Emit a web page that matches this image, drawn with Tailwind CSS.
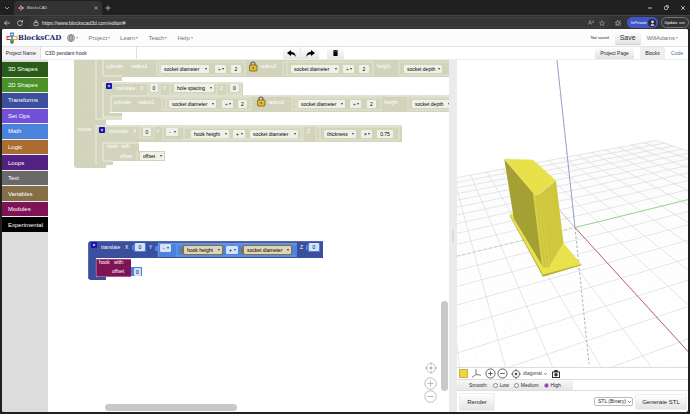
<!DOCTYPE html>
<html lang="en">
<head>
    <meta charset="UTF-8">
    <meta name="viewport" content="width=device-width, initial-scale=1.0">
    <title>BlocksCAD</title>
    <script src="https://cdn.jsdelivr.net/npm/@tailwindcss/browser@4"></script>
</head>
<body class="h-screen flex flex-col overflow-hidden bg-[#202020] font-['Liberation_Sans',sans-serif] text-[5px] leading-none text-gray-800">

    <!-- Browser tabs -->
    <div class="h-[15px] shrink-0 flex items-stretch text-gray-300">
        <button class="w-[14px] flex items-center justify-center" aria-label="Tab actions">
            <svg class="size-[6px]" viewBox="0 0 6 6" fill="none" stroke="currentColor" stroke-width=".7"><path d="M1 2l2 2 2-2"/></svg>
        </button>
        <div class="w-[88px] mt-[1px] rounded-t bg-[#333333] flex items-center gap-[3px] px-[4px] text-[4px]">
            <svg class="size-[6px]" viewBox="0 0 12 12"><path fill="#e8785a" d="M1 4h4v4H1z"/><path fill="#e6c04a" d="M7 4h4v4H7z"/><path fill="#6da7e0" d="M4 1h4v3H4z"/><path fill="#d84b88" d="M4 8h4v3H4z"/></svg>
            <span class="flex-1">BlocksCAD</span>
            <button aria-label="Close tab"><svg class="size-[4px]" viewBox="0 0 4 4" stroke="currentColor" stroke-width=".6"><path d="M.5 .5l3 3M3.5 .5l-3 3"/></svg></button>
        </div>
        <button class="w-[12px] flex items-center justify-center" aria-label="New tab">
            <svg class="size-[6px]" viewBox="0 0 6 6" stroke="currentColor" stroke-width=".7"><path d="M3 .5v5M.5 3h5"/></svg>
        </button>
        <div class="ml-auto flex items-center gap-[12px] pr-[5px] text-white">
            <button aria-label="Minimize"><svg class="size-[4px]" viewBox="0 0 4 4" stroke="currentColor" stroke-width=".7"><path d="M0 2h4"/></svg></button>
            <button aria-label="Restore"><svg class="size-[5px]" viewBox="0 0 5 5" fill="none" stroke="currentColor" stroke-width=".6"><rect x=".5" y="1.5" width="3" height="3" rx=".6"/><path d="M2 .5h1.8q.7 0 .7.7V3"/></svg></button>
            <button aria-label="Close"><svg class="size-[4px]" viewBox="0 0 4 4" stroke="currentColor" stroke-width=".7"><path d="M.2 .2l3.6 3.6M3.8 .2L.2 3.8"/></svg></button>
        </div>
    </div>

    <!-- Address bar -->
    <div class="h-[14px] shrink-0 bg-[#333333] border-t border-[#444444] flex items-center gap-[6px] px-[4px] text-gray-200">
        <button aria-label="Back"><svg class="size-[6px]" viewBox="0 0 6 6" fill="none" stroke="currentColor" stroke-width=".7"><path d="M6 3H.5M3 .5L.5 3 3 5.5"/></svg></button>
        <button class="ml-[1px]" aria-label="Reload"><svg class="size-[6px]" viewBox="0 0 6 6" fill="none" stroke="currentColor" stroke-width=".7"><path d="M5.3 2A2.5 2.5 0 1 0 5.5 3.5M5.5 .3V2H3.8"/></svg></button>
        <div class="flex-1 h-[11px] rounded-full bg-[#363636] border border-[#404040] flex items-center gap-[3px] px-[3px]">
            <svg class="size-[6px] shrink-0" viewBox="0 0 6 6" fill="none" stroke="currentColor" stroke-width=".6"><rect x="1" y="2.5" width="4" height="3" rx=".5"/><path d="M2 2.5V1.5a1 1 0 0 1 2 0v1"/></svg>
            <input class="flex-1 min-w-0 outline-none" aria-label="Address" value="https://www.blockscad3d.com/editor/#">
            <svg class="w-[6px] h-[5px]" viewBox="0 0 6 5" fill="none" stroke="#aaaaaa" stroke-width=".6"><path d="M.3 4.7L2 .5l1.7 4.2M1 3.2h2M4 .8q1 .8 0 1.8M5 .2q1.3 1.5 0 3"/></svg>
            <svg class="size-[6px] ml-[2px]" viewBox="0 0 12 12" fill="none" stroke="#bbbbbb"><path d="M6 1l1.5 3.4 3.6.4-2.7 2.5.8 3.7L6 9.1 2.8 11l.8-3.7L.9 4.8l3.6-.4z"/></svg>
        </div>
        <button aria-label="Favorites"><svg class="size-[6px]" viewBox="0 0 12 12" fill="none" stroke="currentColor"><path d="M5 1l1.5 3.4 3.6.4-2.7 2.5.8 3.7L5 9.1 1.8 11l.8-3.7L1 4.8l2.5-.4zM9 2h3M10 7h2M10 10h2"/></svg></button>
        <button class="-mr-[3px] w-[31px] h-[11px] rounded-full bg-[#4355c4] text-white text-[4px] flex items-center justify-between pl-[4px] pr-[2px]">InPrivate
            <svg class="size-[8px]" viewBox="0 0 8 8"><circle cx="4" cy="4" r="4" fill="#26283a"/><circle cx="4.5" cy="2.8" r="1.4" fill="#d8d8d8"/><path d="M2.5 7q.2-2.5 2-2.5t1.8 2.5z" fill="#bbbbbb"/></svg>
        </button>
        <button class="-mr-[3px] w-[28px] h-[11px] rounded-full border border-[#777777] text-white text-[4px] flex items-center justify-center gap-[2px]">Update
            <svg class="w-[6px] h-[2px]" viewBox="0 0 6 2" fill="currentColor"><circle cx="1" cy="1" r=".7"/><circle cx="3" cy="1" r=".7"/><circle cx="5" cy="1" r=".7"/></svg>
        </button>
    </div>

    <div class="flex-1 min-h-0 mx-[2px] mb-[2px] flex flex-col bg-white rounded-[2px] overflow-hidden">

        <!-- Site header -->
        <header class="h-[18px] shrink-0 flex items-center bg-[#fcfcfc] border-b border-[#e4e4e4] text-[6px] text-[#777777]">
            <a href="#" class="flex items-center pl-[4px] font-['DejaVu_Serif',serif] font-bold text-[7px] text-[#1f2a6b]">
                <svg class="size-[12px]" viewBox="0 0 24 24">
                    <path fill="#4f93d2" d="M8 1h8v8h-2.5a2 2 0 1 1-3 0H8z"/>
                    <path fill="#cf2f4f" d="M1 8h8v2.5a2 2 0 1 0 0 3V16H1z"/>
                    <path fill="#e7a33c" d="M15 8h8v8h-8v-2.5a2 2 0 1 0 0-3z"/>
                    <path fill="#57a345" d="M8 15h2.5a2 2 0 1 1 3 0H16v5H8z"/>
                    <path fill="#6d3f9b" d="M9 20h6v3H9z"/>
                    <path fill="#ffffff" d="M3 10h4v1.5H4.5v1H7V14H3zM17 10h4v4h-4zM10.5 4h3v2h-3z"/>
                </svg>
                BlocksCAD
            </a>
            <nav class="flex items-center gap-[10px] ml-[6px]">
                <button class="flex items-center gap-[1px]" aria-label="Language">
                    <svg class="size-[8px]" viewBox="0 0 8 8" fill="none" stroke="currentColor" stroke-width=".7"><circle cx="4" cy="4" r="3.5"/><ellipse cx="4" cy="4" rx="1.6" ry="3.5"/><path d="M.5 4h7M4 .5v7M1 2.2h6M1 5.8h6"/></svg>
                    <svg class="w-[2px] h-[2px]" viewBox="0 0 4 3" fill="currentColor"><path d="M0 0h4L2 3z"/></svg>
                </button>
                <button class="flex items-center gap-[1px]">Project<svg class="w-[2px] h-[2px]" viewBox="0 0 4 3" fill="currentColor"><path d="M0 0h4L2 3z"/></svg></button>
                <button class="flex items-center gap-[1px]">Learn<svg class="w-[2px] h-[2px]" viewBox="0 0 4 3" fill="currentColor"><path d="M0 0h4L2 3z"/></svg></button>
                <button class="flex items-center gap-[1px]">Teach<svg class="w-[2px] h-[2px]" viewBox="0 0 4 3" fill="currentColor"><path d="M0 0h4L2 3z"/></svg></button>
                <button class="flex items-center gap-[1px]">Help<svg class="w-[2px] h-[2px]" viewBox="0 0 4 3" fill="currentColor"><path d="M0 0h4L2 3z"/></svg></button>
            </nav>
            <div class="ml-auto flex items-center pr-[10px]">
                <span class="text-[4px] text-gray-800 mr-[6px]">Not saved</span>
                <button class="w-[26px] h-[15px] rounded-[2px] bg-linear-to-b from-white to-[#e6e6e6] border-b border-[#cccccc] text-[7px] text-gray-800 mr-[6px]">Save</button>
                <button class="flex items-center gap-[1px]">WillAdams<svg class="w-[2px] h-[2px]" viewBox="0 0 4 3" fill="currentColor"><path d="M0 0h4L2 3z"/></svg></button>
            </div>
        </header>

        <!-- Project bar -->
        <div class="h-[13px] shrink-0 flex items-stretch border-b border-[#eeeeee]">
            <label for="projectName" class="w-[39px] flex items-center justify-center bg-[#f3f3f3] border-r border-[#e0e0e0]">Project Name</label>
            <input id="projectName" class="w-[96px] pl-[4px] border-r border-[#e0e0e0] outline-none" value="C3D pendant hook">
            <div class="ml-[146px] flex">
                <button class="w-[18px] flex items-center justify-center bg-linear-to-b from-white to-[#e6e6e6] border-r border-[#e6e6e6]" aria-label="Undo">
                    <svg class="w-[9px] h-[7px]" viewBox="0 0 9 7"><path d="M0 3L4 0v1.800Q8.5 2 8.8 7 7.5 4.3 4 4.3V6z"/></svg>
                </button>
                <button class="w-[18px] flex items-center justify-center bg-linear-to-b from-white to-[#e6e6e6]" aria-label="Redo">
                    <svg class="w-[9px] h-[7px]" viewBox="0 0 9 7"><path d="M9 3L5 0v1.800Q.5 2 .2 7 1.5 4.3 5 4.3V6z"/></svg>
                </button>
                <button class="w-[17px] ml-[8px] flex items-center justify-center bg-linear-to-b from-white to-[#e6e6e6]" aria-label="Delete">
                    <svg class="w-[5px] h-[6px]" viewBox="0 0 5 6"><path d="M0 .5h1.5V0h2v.5H5v1H0zM.4 1.8h4.2V6H.4z"/></svg>
                </button>
            </div>
            <div class="ml-auto flex items-stretch pr-[4px]">
                <button class="w-[39px] rounded-[1px] bg-linear-to-b from-white to-[#e2e2e2]">Project Page</button>
                <button class="w-[25px] ml-[6px] bg-[#eeeeee]">Blocks</button>
                <button class="w-[14px] ml-[5px] text-[#4a6a94]">Code</button>
            </div>
        </div>

        <main class="flex-1 min-h-0 grid grid-cols-[46px_401fr_8px_231fr] grid-rows-1">

            <!-- Toolbox -->
            <aside class="bg-[#dddddd] pt-[2px]">
                <div class="h-[170px] grid grid-rows-11 gap-[1px] bg-[#eeeeee] text-[6px] text-white *:text-left *:pl-[6px]">
                    <button class="bg-[#2b5c17]">3D Shapes</button>
                    <button class="bg-[#4b9128]">2D Shapes</button>
                    <button class="bg-[#3b4f9c]">Transforms</button>
                    <button class="bg-[#7350d8]">Set Ops</button>
                    <button class="bg-[#4b82dc]">Math</button>
                    <button class="bg-[#ab6c31]">Logic</button>
                    <button class="bg-[#532180]">Loops</button>
                    <button class="bg-[#696969]">Text</button>
                    <button class="bg-[#846f47]">Variables</button>
                    <button class="bg-[#7e1455]">Modules</button>
                    <button class="bg-black">Experimental</button>
                </div>
            </aside>

            <!-- Block workspace -->
            <section id="workspace" class="relative overflow-hidden bg-white" aria-label="Workspace">
                <svg class="absolute inset-0 size-full text-[5px]">
                    <defs>
                        <pattern id="off" width="3" height="3" patternUnits="userSpaceOnUse"><path fill="#cfd1b8" d="M0 0h3v3H0z"/><path stroke="#d6d8c3" stroke-width=".5" d="M0 0l3 3M3 0L0 3"/></pattern>
                        <g id="plus"><rect width="6" height="6" rx="1" fill="#1414b4"/><path d="M3 1.8v2.4M1.8 3h2.4" stroke="#ffffff" stroke-width=".8"/></g>
                        <g id="lock"><path d="M2 5V3a2 2 0 0 1 4 0v2" fill="none" stroke="#555555" stroke-width="1.1"/><rect x=".5" y="4" width="7.5" height="6" rx="1" fill="#e8b930" stroke="#5f4d17" stroke-width=".7"/><circle cx="4.2" cy="7" r=".8" fill="#4a3a10"/></g>
                    </defs>
                    <g transform="translate(-48 -60)">
                        <!-- disabled stack -->
                        <path fill="url(#off)" d="M74 60H449V77H122V81H110V82H243V95H449V112H110V113H122V120H106V125H402V142H139V151H165V161H113V165H106V168H76L74 166Z"/>
                        <g fill="none" stroke="#f1f2e6" stroke-width=".9">
                            <path d="M96 60V119H122M103 60V76H122M103 117V83H243M111 112V96H449M122 117H102M96 165V126H402M103 161V143H139M103 161H113"/>
                        </g>
                        <g fill="none" stroke="#e4e6d5" stroke-width="1">
                            <rect x="157" y="62" width="88" height="13"/><rect x="283" y="62" width="90" height="13"/><rect x="399" y="62" width="60" height="13"/>
                            <rect x="148" y="83" width="12" height="11"/><rect x="170" y="83" width="47" height="11"/><rect x="227" y="83" width="14" height="11"/>
                            <rect x="162" y="98" width="89" height="12"/><rect x="292" y="98" width="89" height="12"/><rect x="408" y="98" width="60" height="12"/>
                            <rect x="140" y="127" width="14" height="11"/><rect x="163" y="127" width="140" height="13"/><rect x="184" y="128" width="117" height="11"/><rect x="316" y="127" width="83" height="13"/>
                            <path d="M160 62v13M287 62v13M166 98v12M296 98v12M320 127v13M137 151v9"/>
                        </g>
                        <g fill="#ffffff">
                            <text x="106" y="68">cylinder</text><text x="131" y="68">radius1</text><text x="260" y="68">radius2</text><text x="377" y="68">height</text>
                            <text x="116" y="90">translate</text><text x="140" y="90">X</text><text x="163" y="90">Y</text><text x="220" y="90">Z</text>
                            <text x="114" y="104">cylinder</text><text x="138" y="104">radius1</text><text x="268" y="104">radius2</text><text x="384" y="104">height</text>
                            <text x="78" y="131">minus</text><text x="109" y="133">translate</text><text x="133" y="133">X</text><text x="156" y="133">Y</text><text x="307" y="133">Z</text>
                            <text x="107" y="148">hook</text><text x="121" y="148">with</text><text x="120" y="158">offset</text>
                        </g>
                        <use href="#lock" x="249" y="61"/><use href="#lock" x="257" y="96"/>
                        <use href="#plus" x="106" y="83"/><use href="#plus" x="99" y="127"/>

                        <!-- active stack -->
                        <path fill="#3b4f9f" d="M90 241H323V258H96V277H106V280H90L88 278V243Z"/>
                        <path fill="none" stroke="#6374b8" stroke-width=".7" d="M88.5 279V243l2-1.5H323"/>
                        <path fill="#7e1455" d="M96 259H131V277H97L96 276Z"/>
                        <path fill="none" stroke="#c78fb0" stroke-width=".6" d="M96.3 276V259.3H131M96.3 276.5H131"/>
                        <g fill="#4b82dc">
                            <path d="M134 243h12v9h-12v-2h-2v-5h2zM158 243h139v14h-139v-6h-3v-5h3zM308 243h12v9h-12v-2h-2v-5h2zM131 267h11v9h-11z"/>
                        </g>
                        <path fill="none" stroke="#82a9ea" stroke-width=".7" d="M158.3 257V243.3H297M177 256V245H296M177 256H296"/>
                        <path fill="#846f47" d="M183 245h40v10h-40v-2h-2v-5h2zM243 245h49v10h-49v-2h-2v-5h2z"/>
                        <use href="#plus" x="91" y="242"/>
                        <g fill="#ffffff">
                            <text x="101" y="249">translate</text><text x="125" y="249">X</text><text x="149" y="249">Y</text><text x="300" y="249">Z</text>
                            <text x="99" y="264">hook</text><text x="114" y="264">with:</text><text x="112" y="273">offset</text>
                        </g>
                    </g>
                </svg>

                <div class="absolute right-[12px] bottom-[9px] flex flex-col items-center text-[#b4b4b4]">
                    <button class="mb-[3px]" aria-label="Center"><svg class="size-[12px]" viewBox="0 0 12 12" fill="none" stroke="currentColor" stroke-width=".8"><circle cx="6" cy="6" r="4.5"/><path d="M6 0v3M6 9v3M0 6h3M9 6h3"/><circle cx="6" cy="6" r="1.2" fill="currentColor"/></svg></button>
                    <button aria-label="Zoom in"><svg class="size-[13px]" viewBox="0 0 12 12" fill="none" stroke="currentColor" stroke-width=".8"><circle cx="6" cy="6" r="5.3"/><path d="M6 3v6M3 6h6"/></svg></button>
                    <button aria-label="Zoom out"><svg class="size-[13px]" viewBox="0 0 12 12" fill="none" stroke="currentColor" stroke-width=".8"><circle cx="6" cy="6" r="5.3"/><path d="M3 6h6"/></svg></button>
                </div>
                <!-- scrollbars -->
                <div class="absolute right-[1px] top-[241px] w-[7px] h-[90px] rounded-full bg-[#c8c8c8]"></div>
                <div class="absolute bottom-[1px] left-[57px] w-[132px] h-[7px] rounded-full bg-[#c8c8c8]"></div>
            </section>

            <div class="bg-[#ebebeb] flex items-center justify-center"><div class="w-[2px] h-[12px] bg-[#dddddd]"></div></div>

            <!-- Viewer -->
            <section class="flex flex-col min-w-0">
                <svg id="scene" class="flex-1 min-h-0 w-full" viewBox="457 60 231 306" preserveAspectRatio="xMidYMid slice">
                    <g id="grid" fill="none"></g>
                    <path d="M557 60L575 227" stroke="#9c9cc6" fill="none"/>
                    <path d="M555.5 64h3M559 95h3M562 125h3M565 153h3" stroke="#b8b8d4" stroke-width=".5"/>
                    <path d="M575 227L589 363" stroke="#a3a3bd" stroke-width=".9" stroke-dasharray="2.5 2" fill="none"/>
                    <path d="M457 255.5L575 227" stroke="#a4dd98" stroke-width=".9" stroke-dasharray="3 2.5" fill="none"/>
                    <path d="M575 227L688 199" stroke="#8fd884" stroke-width=".9" fill="none"/>
                    <path d="M575 227L688 351" stroke="#b85a5a" stroke-width=".9" fill="none"/>
                    <path d="M560 210L575 227" stroke="#b88a8a" stroke-width=".7" stroke-dasharray="1.5 1" fill="none"/>
                    <path fill="#e9e24b" d="M510 214l4-1 49 29 18.5 22L543 275z"/>
                    <path fill="#b3ac35" d="M510 214l33 60 38.5-10.5v1L543 276l-33-60.5z"/>
                    <path fill="#a5a033" d="M504.5 159L534 193l9 73-29-48z"/>
                    <path fill="#cfc83e" d="M539 194l17-14 7.5 62-14.500 24h-3z"/>
                    <path fill="#d6cf43" d="M533 193q3 2 7 0l10 73q-4 2-8 0z"/>
                    <path stroke="#bdb639" stroke-width=".6" fill="none" d="M536.5 195l8.5 71M539 195l9 71"/>
                    <path fill="#e8e14c" d="M504.5 158.5l28.5 1 23 20.500-17 13.500q-2.500 1.500-5 0z"/>
                </svg>

                <div class="h-[12px] shrink-0 flex items-center border-t border-[#dddddd] pl-[2px] text-[#444444]">
                    <button class="size-[9px] bg-[#eed545] border border-[#c9b43b]" aria-label="Color"></button>
                    <button class="ml-[4px]" aria-label="Axes"><svg class="size-[9px]" viewBox="0 0 9 9" fill="none" stroke="currentColor" stroke-width=".7"><path d="M4 0v5.5L0 8.5M4 5.5l5 .7"/></svg></button>
                    <button class="ml-[4px]" aria-label="Zoom in"><svg class="size-[11px]" viewBox="0 0 12 12" fill="none" stroke="currentColor" stroke-width=".9"><circle cx="6" cy="6" r="5"/><path d="M6 3.5v5M3.5 6h5"/></svg></button>
                    <button class="ml-[1px]" aria-label="Zoom out"><svg class="size-[11px]" viewBox="0 0 12 12" fill="none" stroke="currentColor" stroke-width=".9"><circle cx="6" cy="6" r="5"/><path d="M3.5 6h5"/></svg></button>
                    <button class="ml-[3px]" aria-label="Reset view"><svg class="size-[10px]" viewBox="0 0 12 12" fill="none" stroke="currentColor" stroke-width=".9"><circle cx="6" cy="6" r="4.3"/><path d="M6 0v2M6 10v2M0 6h2M10 6h2"/><circle cx="6" cy="6" r="1.2" fill="currentColor"/></svg></button>
                    <div class="relative ml-[2px]">
                        <select class="appearance-none w-[24px] outline-none" aria-label="View"><option>diagonal</option></select>
                        <svg class="absolute right-0 top-[2px] w-[3px] h-[2px] pointer-events-none" viewBox="0 0 3 2" fill="none" stroke="currentColor" stroke-width=".7"><path d="M.2 .2l1.3 1.3L2.8 .2"/></svg>
                    </div>
                    <button class="ml-[5px]" aria-label="Screenshot"><svg class="size-[8px]" viewBox="0 0 8 8"><path fill="#333333" d="M0 1.5h2L2.5 0h3L6 1.5h2V8H0z"/><path fill="#ffffff" d="M1 2.5h6V7H1z"/><circle cx="4" cy="4.7" r="1.8" fill="#333333"/></svg></button>
                </div>

                <div class="h-[12px] shrink-0 border-y border-[#dddddd] flex" role="radiogroup" aria-labelledby="smoothLabel">
                    <div class="w-1/2 bg-linear-to-b from-[#f8f8f8] to-[#e6e6e6] flex items-center pl-[12px]">
                        <span id="smoothLabel" class="mr-[5px]">Smooth:</span>
                        <input type="radio" name="smooth" id="low" class="appearance-none size-[5px] rounded-full border border-[#888888] bg-white"><label for="low" class="ml-[2px] mr-[5px]">Low</label>
                        <input type="radio" name="smooth" id="medium" class="appearance-none size-[5px] rounded-full border border-[#888888] bg-white"><label for="medium" class="ml-[2px] mr-[5px]">Medium</label>
                        <input type="radio" name="smooth" id="high" checked class="appearance-none size-[5px] rounded-full border border-[#c79bd8] bg-[#8a35ab]"><label for="high" class="ml-[2px]">High</label>
                    </div>
                </div>

                <div class="h-[21px] shrink-0 flex items-center pl-[2px] pr-[1px] text-[6px]">
                    <button class="w-[36px] h-[18px] rounded-[2px] bg-linear-to-b from-white to-[#e4e4e4] border border-[#eeeeee]">Render</button>
                    <div class="relative ml-auto mr-[2px]">
                        <select class="appearance-none w-[39px] h-[9px] pl-[3px] rounded-[2px] border border-[#bbbbbb] bg-white text-[5px] outline-none" aria-label="Export format"><option>STL (Binary)</option></select>
                        <svg class="absolute right-[2px] top-[4px] w-[3px] h-[2px] pointer-events-none" viewBox="0 0 3 2" fill="none" stroke="#333333" stroke-width=".7"><path d="M.2 .2l1.3 1.3L2.8 .2"/></svg>
                    </div>
                    <button class="w-[52px] h-[16px] rounded-[2px] bg-linear-to-b from-white to-[#e4e4e4] border border-[#eeeeee]">Generate STL</button>
                </div>
            </section>
        </main>
    </div>

    <script>
        // Editable fields of the blocks: [x, y, width, text, style]
        const originX = 48, originY = 60;
        const styles = {
            off: 'bg-[#f0f1e6] text-black',
            math: 'bg-[#d3e2f8] text-black',
            variable: 'bg-[#ded4b8] text-black'
        };
        const menus = [
            [161, 65, 48, 'socket diameter', 'off'], [215, 65, 11, '÷', 'off'],
            [291, 65, 48, 'socket diameter', 'off'], [343, 65, 11, '÷', 'off'], [404, 65, 38, 'socket depth', 'off'],
            [174, 84, 40, 'hole spacing', 'off'],
            [169, 100, 47, 'socket diameter', 'off'], [222, 100, 11, '÷', 'off'],
            [298, 100, 47, 'socket diameter', 'off'], [350, 100, 11, '÷', 'off'], [412, 100, 40, 'socket depth', 'off'],
            [166, 128, 12, '-', 'off'], [191, 130, 38, 'hook height', 'off'], [233, 130, 12, '+', 'off'],
            [250, 130, 48, 'socket diameter', 'off'], [324, 130, 32, 'thickness', 'off'], [361, 130, 11, '×', 'off'],
            [140, 152, 24, 'offset', 'off'],
            [160, 244, 11, '-', 'math'], [184, 246, 38, 'hook height', 'variable'],
            [226, 246, 12, '+', 'math'], [244, 246, 47, 'socket diameter', 'variable']
        ];
        const numbers = [
            [231, 65, 10, '2', 'off'], [359, 65, 10, '2', 'off'], [150, 84, 8, '0', 'off'], [230, 84, 9, '0', 'off'],
            [238, 100, 9, '2', 'off'], [367, 100, 9, '2', 'off'], [143, 128, 8, '0', 'off'], [377, 130, 16, '0.75', 'off'],
            [135, 243, 10, '0', 'math'], [309, 243, 10, '0', 'math'], [134, 268, 7, '0', 'math']
        ];
        const workspace = document.getElementById('workspace');

        function addField(x, y, w, style, html) {
            const box = document.createElement('div');
            box.className = 'absolute h-[8px] rounded-[1px] ' + styles[style];
            box.style.left = (x - originX) + 'px';
            box.style.top = (y - originY) + 'px';
            box.style.width = w + 'px';
            box.innerHTML = html;
            workspace.appendChild(box);
        }
        menus.forEach(([x, y, w, text, style]) => addField(x, y, w, style,
            `<select class="appearance-none block w-full h-full pl-[3px] text-[5px] leading-[8px] outline-none" aria-label="${text}"><option>${text}</option></select>
             <svg class="absolute right-[2px] top-[3px] w-[2px] h-[2px] pointer-events-none" viewBox="0 0 4 3"><path d="M0 0h4L2 3z"/></svg>`));
        numbers.forEach(([x, y, w, text, style]) => addField(x, y, w, style,
            `<input class="block w-full h-full text-center text-[5px] leading-[8px] outline-none" aria-label="Value" value="${text}">`));

        // Ground plane, projected with two vanishing points
        const O = [575, 227], VA = [1805, -74], VB = [422, 60];
        function project(a, b) {
            const p = a * 0.0189, q = b * 0.058, s = 1 + p + q;
            return [0, 1].map(i => ((O[i] + p * VA[i] + q * VB[i]) / s).toFixed(2)).join(' ');
        }
        let minor = '', major = '';
        for (let n = -50; n <= 50; n++) {
            const k = n / 5;
            const d = `M${project(-10, k)}L${project(10, k)}M${project(k, -10)}L${project(k, 10)}`;
            if (n % 5 === 0) major += d; else minor += d;
        }
        document.getElementById('grid').innerHTML =
            `<path d="${minor}" stroke="#f8f8f8" stroke-width=".5"/><path d="${major}" stroke="#dadada" stroke-width=".7"/>`;
    </script>
</body>
</html>
